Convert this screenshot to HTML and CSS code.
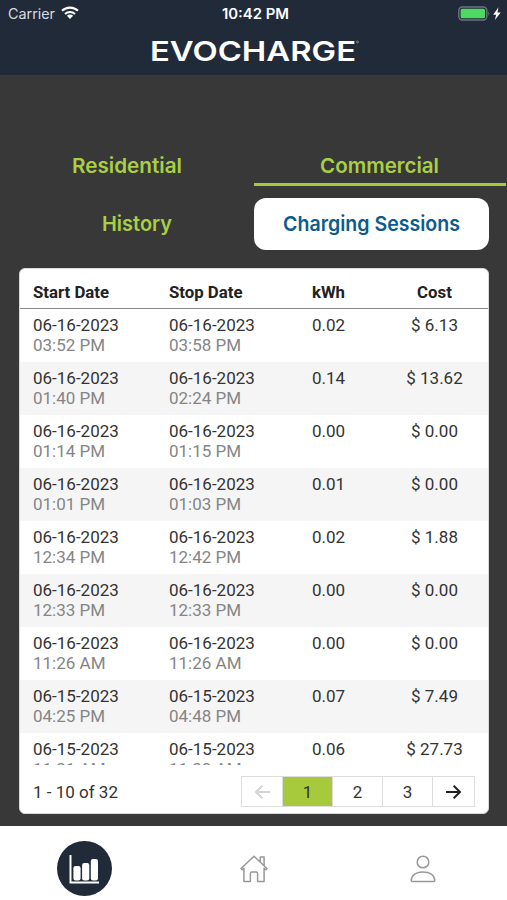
FILE: index.html
```html
<!DOCTYPE html>
<html lang="en">
<head>
<meta charset="utf-8">
<title>EvoCharge</title>
<link rel="stylesheet" href="styles.css">
</head>
<body>
<div class="app">
  <header class="header">
    <div class="status">
      <div class="status-left"><svg class="carrier" width="53" height="20"><text x="0" y="15" textLength="47" lengthAdjust="spacingAndGlyphs">Carrier</text></svg>
        <svg class="wifi" width="18" height="14" viewBox="0 0 18 14"><g fill="none" stroke="#fff" stroke-width="2.2"><path d="M1 4.800a11.500 11.500 0 0 1 16 0"/><path d="M4 8a7.200 7.200 0 0 1 10 0"/></g><path fill="#fff" d="M9 13 5.900 9.800a4.400 4.400 0 0 1 6.200 0z"/></svg>
      </div>
      <svg class="time" width="70" height="20"><text x="2" y="15" textLength="67" lengthAdjust="spacingAndGlyphs">10:42 PM</text></svg>
      <div class="status-right">
        <svg width="44" height="16" viewBox="0 0 44 16"><rect x="0.800" y="1" width="28" height="13" rx="3.500" fill="none" stroke="#6d747f" stroke-width="1.400"/><rect x="2.600" y="2.800" width="24.400" height="9.400" rx="1.500" fill="#4cd964"/><path d="M30.300 5.200q2 2.300 0 4.600z" fill="#6d747f"/><path d="M40.500 1.200 35.200 8.800h3l-1.300 5.200 5.800-7.600h-3.300z" fill="#fff"/></svg>
      </div>
    </div>
    <svg class="logo" width="214" height="30" viewBox="0 0 214 30"><text x="1" y="23.500" textLength="206" lengthAdjust="spacingAndGlyphs">EVOCHARGE</text><circle cx="208.500" cy="5" r="1" fill="none" stroke="#8a909b" stroke-width=".8"/></svg>
  </header>
  <main class="main">
    <nav class="tabs"><a class="tab"><svg width="112" height="30"><text x="1" y="22" textLength="110" lengthAdjust="spacingAndGlyphs">Residential</text></svg></a><a class="tab tab-on"><svg width="122" height="30"><text x="1" y="22" textLength="119" lengthAdjust="spacingAndGlyphs">Commercial</text></svg></a></nav>
    <nav class="pills"><a class="pill"><svg width="72" height="30"><text x="1" y="22" textLength="70" lengthAdjust="spacingAndGlyphs">History</text></svg></a><a class="pill pill-on"><svg width="179" height="30"><text x="1" y="22" textLength="177" lengthAdjust="spacingAndGlyphs">Charging Sessions</text></svg></a></nav>
    <section class="card">
      <div class="row head"><span>Start Date</span><span>Stop Date</span><span class="c">kWh</span><span class="c">Cost</span></div>
      <div class="rows" id="rows"></div>
      <footer class="foot">
        <span>1 - 10 of 32</span>
        <div class="pager">
          <span class="pg pg-prev"><svg width="17" height="16" viewBox="0 0 17 16"><path d="M16 8H2M8.300 1.700 2 8l6.300 6.300"/></svg></span>
          <span class="pg pg-on">1</span><span class="pg">2</span><span class="pg">3</span>
          <span class="pg pg-next"><svg width="17" height="16" viewBox="0 0 17 16"><path d="M1 8h14M8.700 1.700 15 8l-6.300 6.300"/></svg></span>
        </div>
      </footer>
    </section>
  </main>
  <nav class="bottom">
    <a class="item"><span class="disc"><svg width="31" height="30" viewBox="0 0 31 30"><path d="M1.500 1v27.500H30" fill="none" stroke="#fff" stroke-width="2"/><g fill="#fff"><rect x="4.400" y="12" width="7.200" height="14.500" rx="2.200"/><rect x="13.100" y="9" width="7.200" height="17.500" rx="2.200"/><rect x="21.800" y="5" width="7.200" height="21.500" rx="2.200"/></g></svg></span></a>
    <a class="item"><svg width="28" height="28" viewBox="0 0 28 28" class="line"><path d="M1 13.500 14 1.300l13 12.200-1.200 1.200-1.700-1.500v13.400h-6.500v-8.100q0-1.500-1.500-1.500h-4.200q-1.500 0-1.500 1.500v8.100H3.900V13.200l-1.700 1.500zM20.300 6.500V2h3.800v8.200"/></svg></a>
    <a class="item"><svg width="26" height="28" viewBox="0 0 26 28" class="line"><circle cx="13" cy="7" r="5.800"/><path d="M1.200 25.400c.4-5.400 5.200-8.500 11.800-8.500s11.400 3.100 11.800 8.500q0 1.200-1.200 1.200H2.400q-1.200 0-1.200-1.200z"/></svg></a>
  </nav>
</div>
<script src="script.js"></script>
</body>
</html>
```
FILE: styles.css
```css
* { box-sizing: border-box; }
body { margin: 0; background: #383838; font-family: Roboto, sans-serif; }
svg { display: block; overflow: visible; }
.app { width: 507px; height: 900px; display: flex; flex-direction: column; overflow: hidden; }
.header { height: 75px; background: #212a39; display: flex; flex-direction: column; align-items: center; }
.status { width: 100%; height: 28px; padding: 4px 5px 0 8px; display: grid; grid-template-columns: 1fr 70px 1fr; align-items: start; }
.status text { font-family: Inter, sans-serif; font-size: 14px; fill: #fff; }
.status .carrier text { fill: #d9dce1; }
.status .time text { font-weight: 600; }
.status-left { display: flex; }
.wifi { margin-top: 2px; }
.status-right { display: flex; justify-content: flex-end; padding-top: 2px; }
.logo { margin: 9px 0 0 5px; }
.logo text { font: 600 27.500px Inter, sans-serif; fill: #fff; }
.main { height: 751px; padding-top: 72px; display: flex; flex-direction: column; }
.tabs { height: 39px; display: grid; grid-template-columns: 254px 252px; }
.tab, .pill { display: flex; justify-content: center; }
.tab { padding-top: 4px; }
.tab-on { border-bottom: 3px solid #a6ca3b; }
.tab text, .pill text { font: 600 20.500px Inter, sans-serif; fill: #a9cf45; }
.pills { margin: 12px 18px 0 19px; height: 52px; display: grid; grid-template-columns: 235px 235px; }
.pill { align-items: center; border-radius: 12px; }
.pill-on { background: #fff; }
.pill-on text { fill: #0b5b8c; }
.card { margin: 18px 18px 0 19px; height: 546px; background: #fff; border: 1px solid #d9d9d9; border-radius: 6px; overflow: hidden; display: flex; flex-direction: column; }
.row { display: grid; grid-template-columns: 136px 117px 85px 127px; padding: 6px 0 0 13px; height: 53px; flex: none; font-size: 17px; line-height: 20px; color: #333; }
.row:nth-child(even) { background: #f5f5f5; }
.row small { display: block; font-size: 17px; color: #858585; }
.c { text-align: center; }
.head { height: 40px; padding-top: 13px; font-size: 16.800px; font-weight: 700; color: #222; border-bottom: 1px solid #888; }
.rows { height: 456px; overflow: hidden; display: flex; flex-direction: column; }
.foot { flex: 1; display: flex; justify-content: space-between; align-items: center; padding: 5px 13px 0; font-size: 17px; color: #333; }
.pager { display: flex; border: 1px solid #ddd; height: 31px; }
.pg { width: 50px; display: flex; align-items: center; justify-content: center; border-right: 1px solid #ddd; }
.pg-prev { width: 41px; }
.pg-next { width: 41px; border: 0; }
.pg-on { background: #a6ca3b; }
.pg path { fill: none; stroke: #222; stroke-width: 2; }
.pg-prev path { stroke: #d4d4d4; }
.bottom { flex: 1; background: #fff; display: grid; grid-template-columns: repeat(3, 1fr); padding-top: 15px; }
.item { display: flex; justify-content: center; align-items: center; height: 55px; }
.disc { width: 55px; height: 55px; border-radius: 50%; background: #212a39; display: flex; align-items: center; justify-content: center; }
.line { fill: none; stroke: #989898; stroke-width: 1.500; stroke-linejoin: round; }
```
FILE: script.js
```js
const sessions = [
  ["06-16-2023", "03:52 PM", "03:58 PM", "0.02", "6.13"],
  ["06-16-2023", "01:40 PM", "02:24 PM", "0.14", "13.62"],
  ["06-16-2023", "01:14 PM", "01:15 PM", "0.00", "0.00"],
  ["06-16-2023", "01:01 PM", "01:03 PM", "0.01", "0.00"],
  ["06-16-2023", "12:34 PM", "12:42 PM", "0.02", "1.88"],
  ["06-16-2023", "12:33 PM", "12:33 PM", "0.00", "0.00"],
  ["06-16-2023", "11:26 AM", "11:26 AM", "0.00", "0.00"],
  ["06-15-2023", "04:25 PM", "04:48 PM", "0.07", "7.49"],
  ["06-15-2023", "11:21 AM", "11:30 AM", "0.06", "27.73"]
];
document.getElementById("rows").innerHTML = sessions.map(([d, a, b, k, c]) =>
  `<div class="row"><span>${d}<small>${a}</small></span><span>${d}<small>${b}</small></span><span class="c">${k}</span><span class="c">$ ${c}</span></div>`).join("");
```
